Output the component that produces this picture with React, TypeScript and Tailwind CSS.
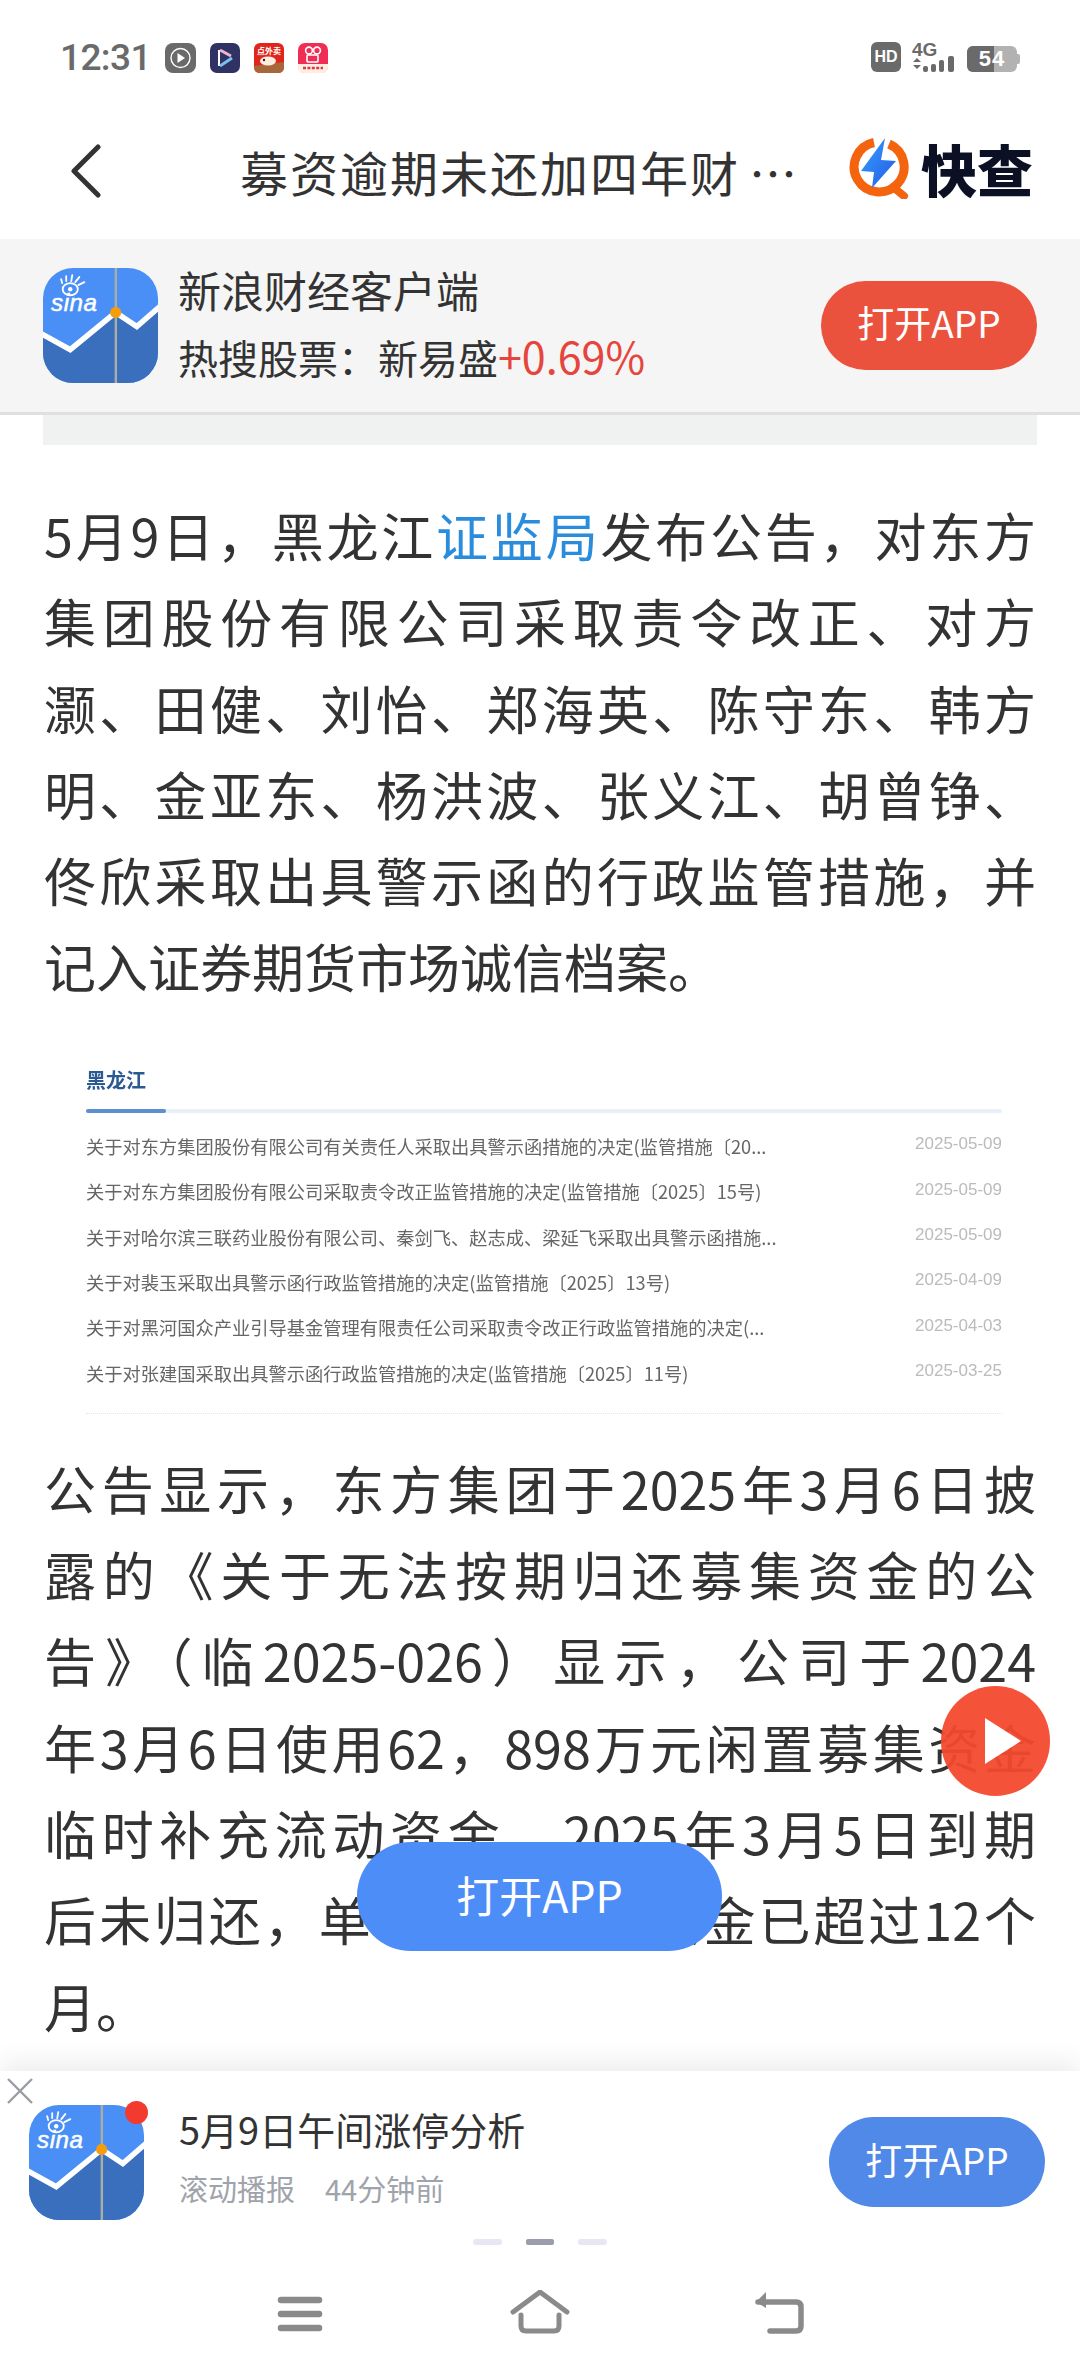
import { ReactNode } from 'react';

const SinaIcon = ({ size, id }: { size: number; id: string }) => (
  <svg width={size} height={size} viewBox="0 0 114 114" className="shrink-0">
    <defs>
      <clipPath id={id}>
        <rect width="114" height="114" rx="30" />
      </clipPath>
    </defs>
    <g clipPath={`url(#${id})`}>
      <rect width="114" height="114" fill="#4a8ff6" />
      <path d="M0 65 L27 80 L72 43 L93 57 L114 38 V114 H0 Z" fill="#3a6fbe" />
      <path d="M-2 65 L27 81 L72 44 L93 58 L116 38" fill="none" stroke="#fff" strokeWidth="5.5" />
      <rect x="71" y="0" width="2.4" height="114" fill="#a8aea6" />
      <circle cx="72" cy="44" r="5.5" fill="#f59d0a" />
      <ellipse cx="27" cy="21" rx="7.5" ry="6" fill="none" stroke="#fff" strokeWidth="1.8" />
      <circle cx="27" cy="21" r="2.2" fill="#fff" />
      <path d="M19 15 L18 11 M23 13 L23 8 M28 13 L29 7 M32 14 L36 9 M35 17 L41 14" stroke="#fff" strokeWidth="1.8" strokeLinecap="round" />
      <text x="8" y="43" fill="#fff" fontSize="24" fontStyle="italic" fontWeight="400" fontFamily="'Liberation Sans', sans-serif" letterSpacing="0.5" stroke="#fff" strokeWidth="0.5">
        sina
      </text>
    </g>
  </svg>
);

const KuaichaMark = () => (
  <svg width="64" height="62" viewBox="0 0 64 62" className="shrink-0">
    <defs>
      <linearGradient id="bolt" x1="0" y1="0" x2="1" y2="1">
        <stop offset="0" stopColor="#35a2f8" />
        <stop offset="1" stopColor="#2458ea" />
      </linearGradient>
    </defs>
    <path d="M41 7 A25 25 0 1 1 26 5.5" fill="none" stroke="#f4640e" strokeWidth="9" />
    <path d="M45 50 L56 59" stroke="#f4640e" strokeWidth="8" strokeLinecap="round" />
    <path d="M37 1 L13 34 L26 35 L24 51 L48 24 L33 23 Z" fill="url(#bolt)" />
  </svg>
);

const StatusApps = () => (
  <div className="flex items-center gap-[14px] ml-[17px]">
    <svg width="31" height="30" viewBox="0 0 31 30">
      <rect width="31" height="30" rx="8" fill="#6a6a6a" />
      <circle cx="15.5" cy="15" r="9.5" fill="none" stroke="#fff" strokeWidth="1.4" />
      <path d="M12.5 10 L20 15 L12.5 20 Z" fill="#fff" />
    </svg>
    <svg width="30" height="30" viewBox="0 0 30 30">
      <rect width="30" height="30" rx="7" fill="#2f3262" />
      <path d="M9 7 V23" stroke="#fff" strokeWidth="2" />
      <path d="M10 7 L21 13" stroke="#eeb3d0" strokeWidth="3" />
      <path d="M10 23 L22 15" stroke="#79c0f2" strokeWidth="3" />
    </svg>
    <svg width="30" height="30" viewBox="0 0 30 30">
      <rect width="30" height="30" rx="6" fill="#e0261c" />
      <text x="15" y="11" textAnchor="middle" fontSize="8" fontWeight="700" fill="#fff">点外卖</text>
      <path d="M0 23 L30 19 V24 Q30 30 24 30 H6 Q0 30 0 24 Z" fill="#a8673a" />
      <ellipse cx="14" cy="18" rx="8" ry="4.5" fill="#fbeee0" />
      <circle cx="10" cy="17" r="1.2" fill="#222" />
    </svg>
    <svg width="30" height="30" viewBox="0 0 30 30">
      <rect width="30" height="30" rx="7" fill="#f02d55" />
      <path d="M0 21 H30 V24 Q30 30 24 30 H6 Q0 30 0 24 Z" fill="#fdeedd" />
      <circle cx="11" cy="7.5" r="3.4" fill="none" stroke="#fff" strokeWidth="1.6" />
      <circle cx="19" cy="7.5" r="3.4" fill="none" stroke="#fff" strokeWidth="1.6" />
      <rect x="9" y="12" width="11" height="7" rx="1" fill="none" stroke="#fff" strokeWidth="1.6" />
      <path d="M5 25 H25" stroke="#e0335a" strokeWidth="2.4" strokeDasharray="3 1.4" />
    </svg>
  </div>
);

const StatusRight = () => (
  <div className="flex items-center">
    <div className="w-[30px] h-[30px] rounded-[6px] bg-[#6a6a6a] flex items-center justify-center text-white text-[16px] font-bold font-['Liberation_Sans',sans-serif]">
      HD
    </div>
    <svg width="46" height="30" viewBox="0 0 46 30" className="ml-[11px]">
      <text x="0" y="14" fontSize="19" fontWeight="700" fill="#6a6a6a" fontFamily="'Liberation Sans', sans-serif">4G</text>
      <path d="M1 20 L5 16 L9 20 Z M1 23 H9 L5 27 Z" fill="#6a6a6a" />
      <rect x="11" y="24" width="5" height="6" rx="2" fill="#6a6a6a" />
      <rect x="19" y="22" width="5" height="8" rx="2" fill="#6a6a6a" />
      <rect x="27" y="18" width="5" height="12" rx="2" fill="#6a6a6a" />
      <rect x="36" y="14" width="6" height="16" rx="2" fill="#6a6a6a" />
    </svg>
    <div className="relative w-[50px] h-[26px] rounded-[6px] bg-[#b2b2b2] ml-[9px] overflow-hidden mt-[4px]">
      <div className="absolute inset-y-0 left-0 w-[27px] bg-[#6a6a6a]" />
      <div className="absolute inset-0 flex items-center justify-center text-white text-[22px] leading-[26px] font-bold font-['Liberation_Sans',sans-serif] tracking-[1px]">
        54
      </div>
    </div>
    <div className="w-[3px] h-[10px] rounded-r-[2px] bg-[#b2b2b2] mt-[4px]" />
  </div>
);

const Line = ({ children, last }: { children: ReactNode; last?: boolean }) => (
  <p className={last ? 'text-left' : 'text-justify [text-align-last:justify]'}>{children}</p>
);

const noticeRows = [
  ['关于对东方集团股份有限公司有关责任人采取出具警示函措施的决定(监管措施〔20...', '2025-05-09'],
  ['关于对东方集团股份有限公司采取责令改正监管措施的决定(监管措施〔2025〕15号)', '2025-05-09'],
  ['关于对哈尔滨三联药业股份有限公司、秦剑飞、赵志成、梁延飞采取出具警示函措施...', '2025-05-09'],
  ['关于对裴玉采取出具警示函行政监管措施的决定(监管措施〔2025〕13号)', '2025-04-09'],
  ['关于对黑河国众产业引导基金管理有限责任公司采取责令改正行政监管措施的决定(...', '2025-04-03'],
  ['关于对张建国采取出具警示函行政监管措施的决定(监管措施〔2025〕11号)', '2025-03-25'],
];

const NoticeList = () => (
  <div className="ml-[86px] mr-[78px] mt-[52px] h-[366px] blur-[0.6px] flex flex-col">
    <div className="text-[20px] leading-[30px] font-bold text-[#2b5a93] mt-[3px]">黑龙江</div>
    <div className="mt-[14px] h-[4px] bg-[#e8eff8] rounded-full">
      <div className="w-[80px] h-[4px] bg-[#5b8fd2] rounded-full" />
    </div>
    <div className="mt-[11px] flex flex-col">
      {noticeRows.map(([title, date]) => (
        <div key={title} className="h-[45.4px] flex items-center justify-between">
          <span className="text-[18.25px] text-[#666] whitespace-nowrap">{title}</span>
          <span className="text-[17px] text-[#bbb] font-['Liberation_Sans',sans-serif] mb-[5px]">{date}</span>
        </div>
      ))}
    </div>
    <div className="mt-[17px] border-t border-dotted border-[#e6e6e6]" />
  </div>
);

export default function App() {
  return (
    <div className="relative w-[1080px] h-[2376px] overflow-hidden bg-white font-['Noto_Sans_CJK_SC','Noto_Sans',sans-serif]">
      {/* status bar */}
      <div className="h-[115px] pl-[60px] pr-[60px] pt-[42px] flex items-start justify-between">
        <div className="flex items-center h-[32px]">
          <span className="w-[88px] text-[37px] leading-[32px] tracking-[-0.6px] font-medium text-[#6a6a6a] font-['Roboto',sans-serif]">12:31</span>
          <StatusApps />
        </div>
        <StatusRight />
      </div>

      {/* title bar */}
      <div className="relative h-[124px] pb-[12px] flex items-center">
        <svg width="32" height="54" viewBox="0 0 32 54" className="ml-[70px]">
          <path d="M28 3 L4 27 L28 51" fill="none" stroke="#333" strokeWidth="5" strokeLinecap="round" strokeLinejoin="round" />
        </svg>
        <div className="ml-[138px] w-[570px] text-[48px] tracking-[2px] text-[#333] whitespace-nowrap">
          募资逾期未还加四年财<span className="ml-[9px]">…</span>
        </div>
        <div className="absolute left-[848px] top-[22px] flex items-center">
          <KuaichaMark />
          <span className="ml-[9px] text-[56px] leading-none font-black text-[#0b1024]">快查</span>
        </div>
      </div>

      {/* app banner */}
      <div className="h-[176px] bg-[#f5f5f5] border-b-[3px] border-[#e0e0e0] pl-[43px] pr-[43px] flex items-center justify-between">
        <div className="flex items-center">
          <SinaIcon size={115} id="bannerIcon" />
          <div className="ml-[20px] pb-[5px] flex flex-col text-[#333]">
            <span className="text-[43px] leading-[66px]">新浪财经客户端</span>
            <span className="text-[40px] leading-[66px] whitespace-nowrap">
              热搜股票：新易盛<span className="text-[43px] text-[#e5453c]">+0.69%</span>
            </span>
          </div>
        </div>
        <div className="w-[216px] h-[89px] pb-[5px] rounded-[45px] bg-[#eb523d] flex items-center justify-center text-white text-[37px]">打开APP</div>
      </div>
      <div className="mx-[43px] h-[30px] bg-[#f0f1f1]" />

      {/* article */}
      <div className="px-[44px] pt-[47px] text-[52px] leading-[86.3px] text-[#333]">
        <Line>
          5月9日，黑龙江<span className="text-[#2a8cdc]">证监局</span>发布公告，对东方
        </Line>
        <Line>集团股份有限公司采取责令改正、对方</Line>
        <Line>灏、田健、刘怡、郑海英、陈守东、韩方</Line>
        <Line>明、金亚东、杨洪波、张义江、胡曾铮、</Line>
        <Line>佟欣采取出具警示函的行政监管措施，并</Line>
        <Line last>记入证券期货市场诚信档案。</Line>
      </div>

      <NoticeList />

      <div className="px-[44px] mt-[17px] text-[52px] leading-[86.3px] text-[#333]">
        <Line>公告显示，东方集团于2025年3月6日披</Line>
        <Line>露的《关于无法按期归还募集资金的公</Line>
        <Line>告》（临2025-026）显示，公司于2024</Line>
        <Line>年3月6日使用62，898万元闲置募集资金</Line>
        <Line>临时补充流动资金，2025年3月5日到期</Line>
        <Line>后未归还，单次使用募集资金已超过12个</Line>
        <Line last>月。</Line>
      </div>

      {/* floating play + open buttons */}
      <div className="absolute left-[941px] top-[1686px] w-[109px] h-[110px] rounded-full bg-[#f44a2e]/95 flex items-center justify-center">
        <svg width="40" height="50" viewBox="0 0 40 50" className="ml-[14px]">
          <path d="M2 2 L38 25 L2 48 Z" fill="#fff" />
        </svg>
      </div>
      <div className="absolute left-[357px] top-[1842px] w-[365px] h-[109px] pb-[5px] rounded-[54px] bg-[#4d8df8] flex items-center justify-center text-white text-[43px]">
        打开APP
      </div>

      {/* bottom recommendation card and nav */}
      <div className="absolute left-0 right-0 top-[2071px] bottom-0 bg-white shadow-[0_-10px_24px_rgba(0,0,0,0.07)]">
        <svg width="28" height="28" viewBox="0 0 28 28" className="absolute left-[6px] top-[6px]">
          <path d="M2 2 L26 26 M26 2 L2 26" stroke="#9a9da5" strokeWidth="2.4" />
        </svg>
        <div className="pl-[29px] pr-[35px] pt-[33px] flex items-center justify-between">
          <div className="flex items-center">
            <div className="relative">
              <SinaIcon size={115} id="cardIcon" />
              <div className="absolute left-[96px] top-[-4px] w-[23px] h-[23px] rounded-full bg-[#f23a2f]" />
            </div>
            <div className="ml-[35px] pb-[12px] flex flex-col">
              <span className="text-[38px] leading-[50px] text-[#333]">5月9日午间涨停分析</span>
              <div className="mt-[14px] flex text-[29px] leading-[40px] text-[#a0a3ab]">
                <span>滚动播报</span>
                <span className="ml-[30px]">44分钟前</span>
              </div>
            </div>
          </div>
          <div className="w-[216px] h-[90px] pb-[4px] rounded-[45px] bg-[#5089e8] flex items-center justify-center text-white text-[37px]">打开APP</div>
        </div>
        <div className="mt-[19px] flex justify-center gap-[24px]">
          <div className="w-[29px] h-[6px] rounded-full bg-[#e6e7f2]" />
          <div className="w-[28px] h-[6px] rounded-[2px] bg-[#9a9dab]" />
          <div className="w-[29px] h-[6px] rounded-full bg-[#e6e7f2]" />
        </div>
        <div className="mt-[45px] flex justify-center gap-[180px]">
          <svg width="60" height="44" viewBox="0 0 60 44">
            <path d="M11 10 H49 M11 24 H49 M11 38 H49" stroke="#8a8a8a" strokeWidth="6.5" strokeLinecap="round" />
          </svg>
          <svg width="60" height="44" viewBox="0 0 60 44">
            <path d="M3 22 L30 2 L57 22" fill="none" stroke="#8a8a8a" strokeWidth="5" strokeLinecap="round" strokeLinejoin="round" />
            <path d="M11 25 V36 Q11 41 16 41 H44 Q49 41 49 36 V25" fill="none" stroke="#8a8a8a" strokeWidth="5" strokeLinecap="round" />
          </svg>
          <svg width="60" height="44" viewBox="0 0 60 44">
            <path d="M8 12 H46 Q51 12 51 17 V36 Q51 41 46 41 H20" fill="none" stroke="#8a8a8a" strokeWidth="5.5" strokeLinecap="round" />
            <path d="M16 2 L6 12 L16 18 Z" fill="#8a8a8a" />
          </svg>
        </div>
      </div>
    </div>
  );
}
